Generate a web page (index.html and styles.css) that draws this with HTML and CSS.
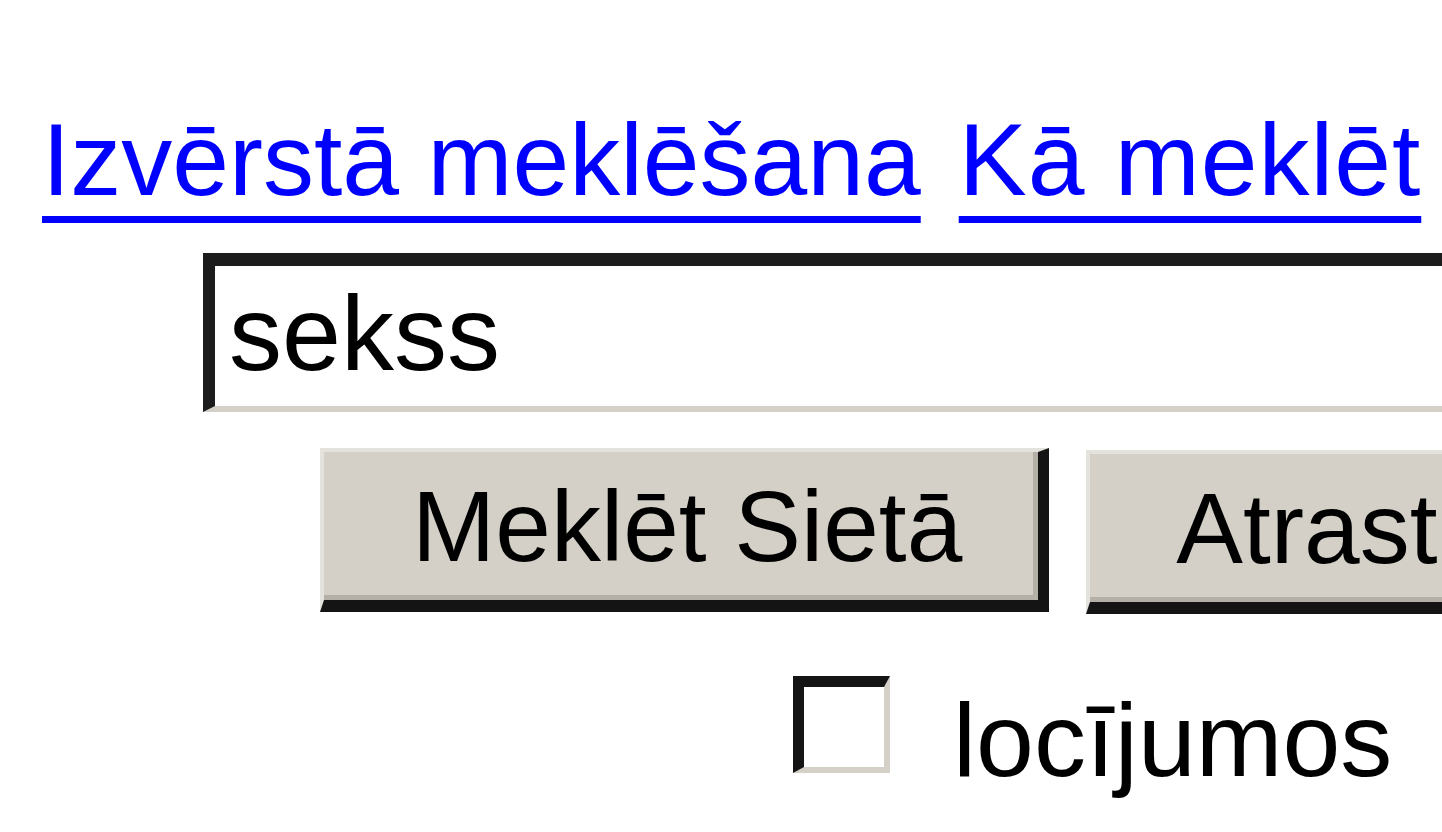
FILE: index.html
```html
<!DOCTYPE html>
<html lang="lv">
<head>
<meta charset="utf-8">
<title>Meklēt</title>
<link rel="stylesheet" href="styles.css">
</head>
<body>
<form class="search" action="#">
  <div class="links">
    <a href="#" class="link">Izvērstā meklēšana</a>
    <a href="#" class="link">Kā meklēt</a>
  </div>
  <div class="field-row">
    <input class="query" type="text" value="sekss">
  </div>
  <div class="button-row">
    <button type="button" class="btn btn-first">Meklēt Sietā</button>
    <button type="button" class="btn">Atrast Latvijā</button>
  </div>
  <div class="option-row">
    <span class="checkbox"></span>
    <span class="option-label">locījumos</span>
  </div>
</form>
</body>
</html>
```
FILE: styles.css
```css
html, body {
  margin: 0;
  padding: 0;
  background: #ffffff;
  overflow: hidden;
}

body {
  width: 1442px;
  height: 832px;
  font-family: "Liberation Sans", Arial, sans-serif;
  color: #000000;
}

.search {
  display: flex;
  flex-direction: column;
  padding-top: 102px;
  width: 2600px;
}

.links {
  display: flex;
  gap: 38px;
  padding-left: 42px;
  font-size: 102px;
  line-height: normal;
  white-space: nowrap;
}

.link {
  color: #0000ff;
  text-decoration: underline;
  text-decoration-thickness: 7px;
  text-underline-offset: 21px;
}

.link + .link {
  letter-spacing: 1px;
}

.field-row {
  display: flex;
  margin-top: 34px;
  padding-left: 203px;
}

.query {
  box-sizing: border-box;
  width: 2000px;
  height: 159px;
  margin: 0;
  padding: 0 0 5px 14px;
  font-family: "Liberation Sans", Arial, sans-serif;
  font-size: 106px;
  color: #000000;
  background: #ffffff;
  border-style: solid;
  border-width: 13px 0 6px 12px;
  border-color: #1c1c1c #d4d0c8 #d4d0c8 #1c1c1c;
  outline: none;
}

.button-row {
  display: flex;
  align-items: flex-start;
  gap: 37px;
  margin-top: 36px;
  padding-left: 320px;
}

.btn {
  box-sizing: border-box;
  height: 164px;
  margin: 0;
  padding: 0 76px 0 88px;
  font-family: "Liberation Sans", Arial, sans-serif;
  font-size: 100px;
  color: #000000;
  background: #d4d0c8;
  border-style: solid;
  border-width: 4px 11px 12px 4px;
  border-color: #e4e2dd #141414 #141414 #e4e2dd;
  box-shadow: inset -5px -5px 0 #b4b0a8;
  white-space: nowrap;
  cursor: default;
}

.btn + .btn {
  margin-top: 2px;
  padding-left: 86px;
  padding-right: 200px;
}

.option-row {
  display: flex;
  align-items: flex-start;
  margin-top: 62px;
  padding-left: 793px;
}

.checkbox {
  box-sizing: border-box;
  width: 97px;
  height: 97px;
  flex: none;
  background: #ffffff;
  border-style: solid;
  border-width: 11px 6px 6px 11px;
  border-color: #141414 #d4d0c8 #d4d0c8 #141414;
}

.option-label {
  margin-left: 63px;
  margin-top: 5px;
  font-size: 104px;
  line-height: normal;
  white-space: nowrap;
}
```
